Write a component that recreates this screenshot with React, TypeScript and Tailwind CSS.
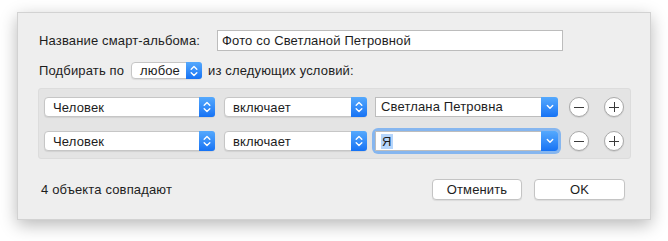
import React from 'react';

const font = { fontFamily: '"Liberation Sans", Arial, sans-serif' };

function Stepper() {
  return (
    <svg width="8" height="12" viewBox="0 0 8 12" fill="none" stroke="white" strokeWidth="1.4" strokeLinecap="round" strokeLinejoin="round">
      <path d="M1.2 4.2 L4 1.5 L6.8 4.2" />
      <path d="M1.2 7.8 L4 10.5 L6.8 7.8" />
    </svg>
  );
}

function Chevron() {
  return (
    <svg width="8" height="6" viewBox="0 0 8 6" fill="none" stroke="white" strokeWidth="1.4" strokeLinecap="round" strokeLinejoin="round">
      <path d="M1.3 1.6 L4 4.3 L6.7 1.6" />
    </svg>
  );
}

function Popup({ label, width, height = 20 }: { label: string; width: number; height?: number }) {
  return (
    <div
      className="flex items-stretch bg-white rounded-[4px] border border-[#c6c6c6] shadow-[0_1px_1px_rgba(0,0,0,0.08)] shrink-0"
      style={{ width, height }}
    >
      <span className="flex-1 flex items-center pl-[8px] text-[13px] text-[#1d1d1d] leading-none">{label}</span>
      <span className="w-[16px] flex items-center justify-center rounded-r-[3px] bg-gradient-to-b from-[#55a9fd] to-[#1572f4] -my-px -mr-px">
        <Stepper />
      </span>
    </div>
  );
}

function Combo({ value, focused }: { value: string; focused?: boolean }) {
  return (
    <div
      className={
        'flex items-stretch w-[183px] h-[20px] shrink-0 ' +
        (focused ? 'rounded-[3px] ring-[3px] ring-[#86b6ef]' : '')
      }
    >
      <div className="flex-1 flex items-center bg-white border border-[#bdbdbd] border-r-0 pl-[5px] text-[13px] text-[#1d1d1d]">
        {focused ? <span className="bg-[#b5d5fb] px-px leading-[15px]">{value}</span> : value}
      </div>
      <span className="w-[17px] flex items-center justify-center rounded-r-[3px] bg-gradient-to-b from-[#55a9fd] to-[#1572f4]">
        <Chevron />
      </span>
    </div>
  );
}

function RoundButton({ plus }: { plus?: boolean }) {
  return (
    <div className="relative w-[20px] h-[20px] rounded-full bg-white border border-[#a9a9a9] shadow-[0_1px_1px_rgba(0,0,0,0.1)] shrink-0">
      <span className="absolute left-[4px] right-[4px] top-[9px] h-px bg-[#3a3a3a]" />
      {plus && <span className="absolute top-[4px] bottom-[4px] left-[9px] w-px bg-[#3a3a3a]" />}
    </div>
  );
}

function CriteriaRow({ value, focused }: { value: string; focused?: boolean }) {
  return (
    <div className="flex items-center">
      <Popup label="Человек" width={171} />
      <div className="ml-[9px]">
        <Popup label="включает" width={143} />
      </div>
      <div className="ml-[8px]">
        <Combo value={value} focused={focused} />
      </div>
      <div className="ml-[11px]">
        <RoundButton />
      </div>
      <div className="ml-[15px]">
        <RoundButton plus />
      </div>
    </div>
  );
}

export default function App() {
  return (
    <div className="w-[668px] h-[241px] bg-white pt-[12px] pl-[17px]" style={font}>
      <div className="w-[634px] h-[208px] bg-[#eeeeee] border border-[#d2d2d2] shadow-[0_5px_16px_rgba(0,0,0,0.28)] pl-[20px] pr-[21px] pt-[17px] text-[13px] text-[#1d1d1d] tracking-[0.15px]">
        {/* Название */}
        <div className="flex items-center h-[21px]">
          <span className="w-[179px] pl-px">Название смарт-альбома:</span>
          <div className="w-[346px] h-[21px] bg-white border border-[#bcbcbc] flex items-center pl-[4px]">
            Фото со Светланой Петровной
          </div>
        </div>

        {/* Подбирать по */}
        <div className="flex items-center mt-[11px] h-[17px]">
          <span className="w-[93px] pl-px">Подбирать по</span>
          <Popup label="любое" width={71} height={17} />
          <span className="ml-[6px]">из следующих условий:</span>
        </div>

        {/* Условия */}
        <div className="mt-[9px] w-[593px] h-[71px] bg-[#e4e4e4] border border-[#dcdcdc] rounded-[3px] pl-[5px] pt-[8px] flex flex-col gap-[14px]">
          <CriteriaRow value="Светлана Петровна" />
          <CriteriaRow value="Я" focused />
        </div>

        {/* Footer */}
        <div className="flex items-center justify-between mt-[20px] pr-[4px]">
          <span className="pl-[3px]">4 объекта совпадают</span>
          <div className="flex gap-[12px]">
            <button className="w-[90px] h-[21px] bg-white rounded-[4px] border border-[#c4c4c4] shadow-[0_1px_1px_rgba(0,0,0,0.08)] text-[13px]">
              Отменить
            </button>
            <button className="w-[91px] h-[21px] bg-white rounded-[4px] border border-[#c4c4c4] shadow-[0_1px_1px_rgba(0,0,0,0.08)] text-[13px]">
              OK
            </button>
          </div>
        </div>
      </div>
    </div>
  );
}
